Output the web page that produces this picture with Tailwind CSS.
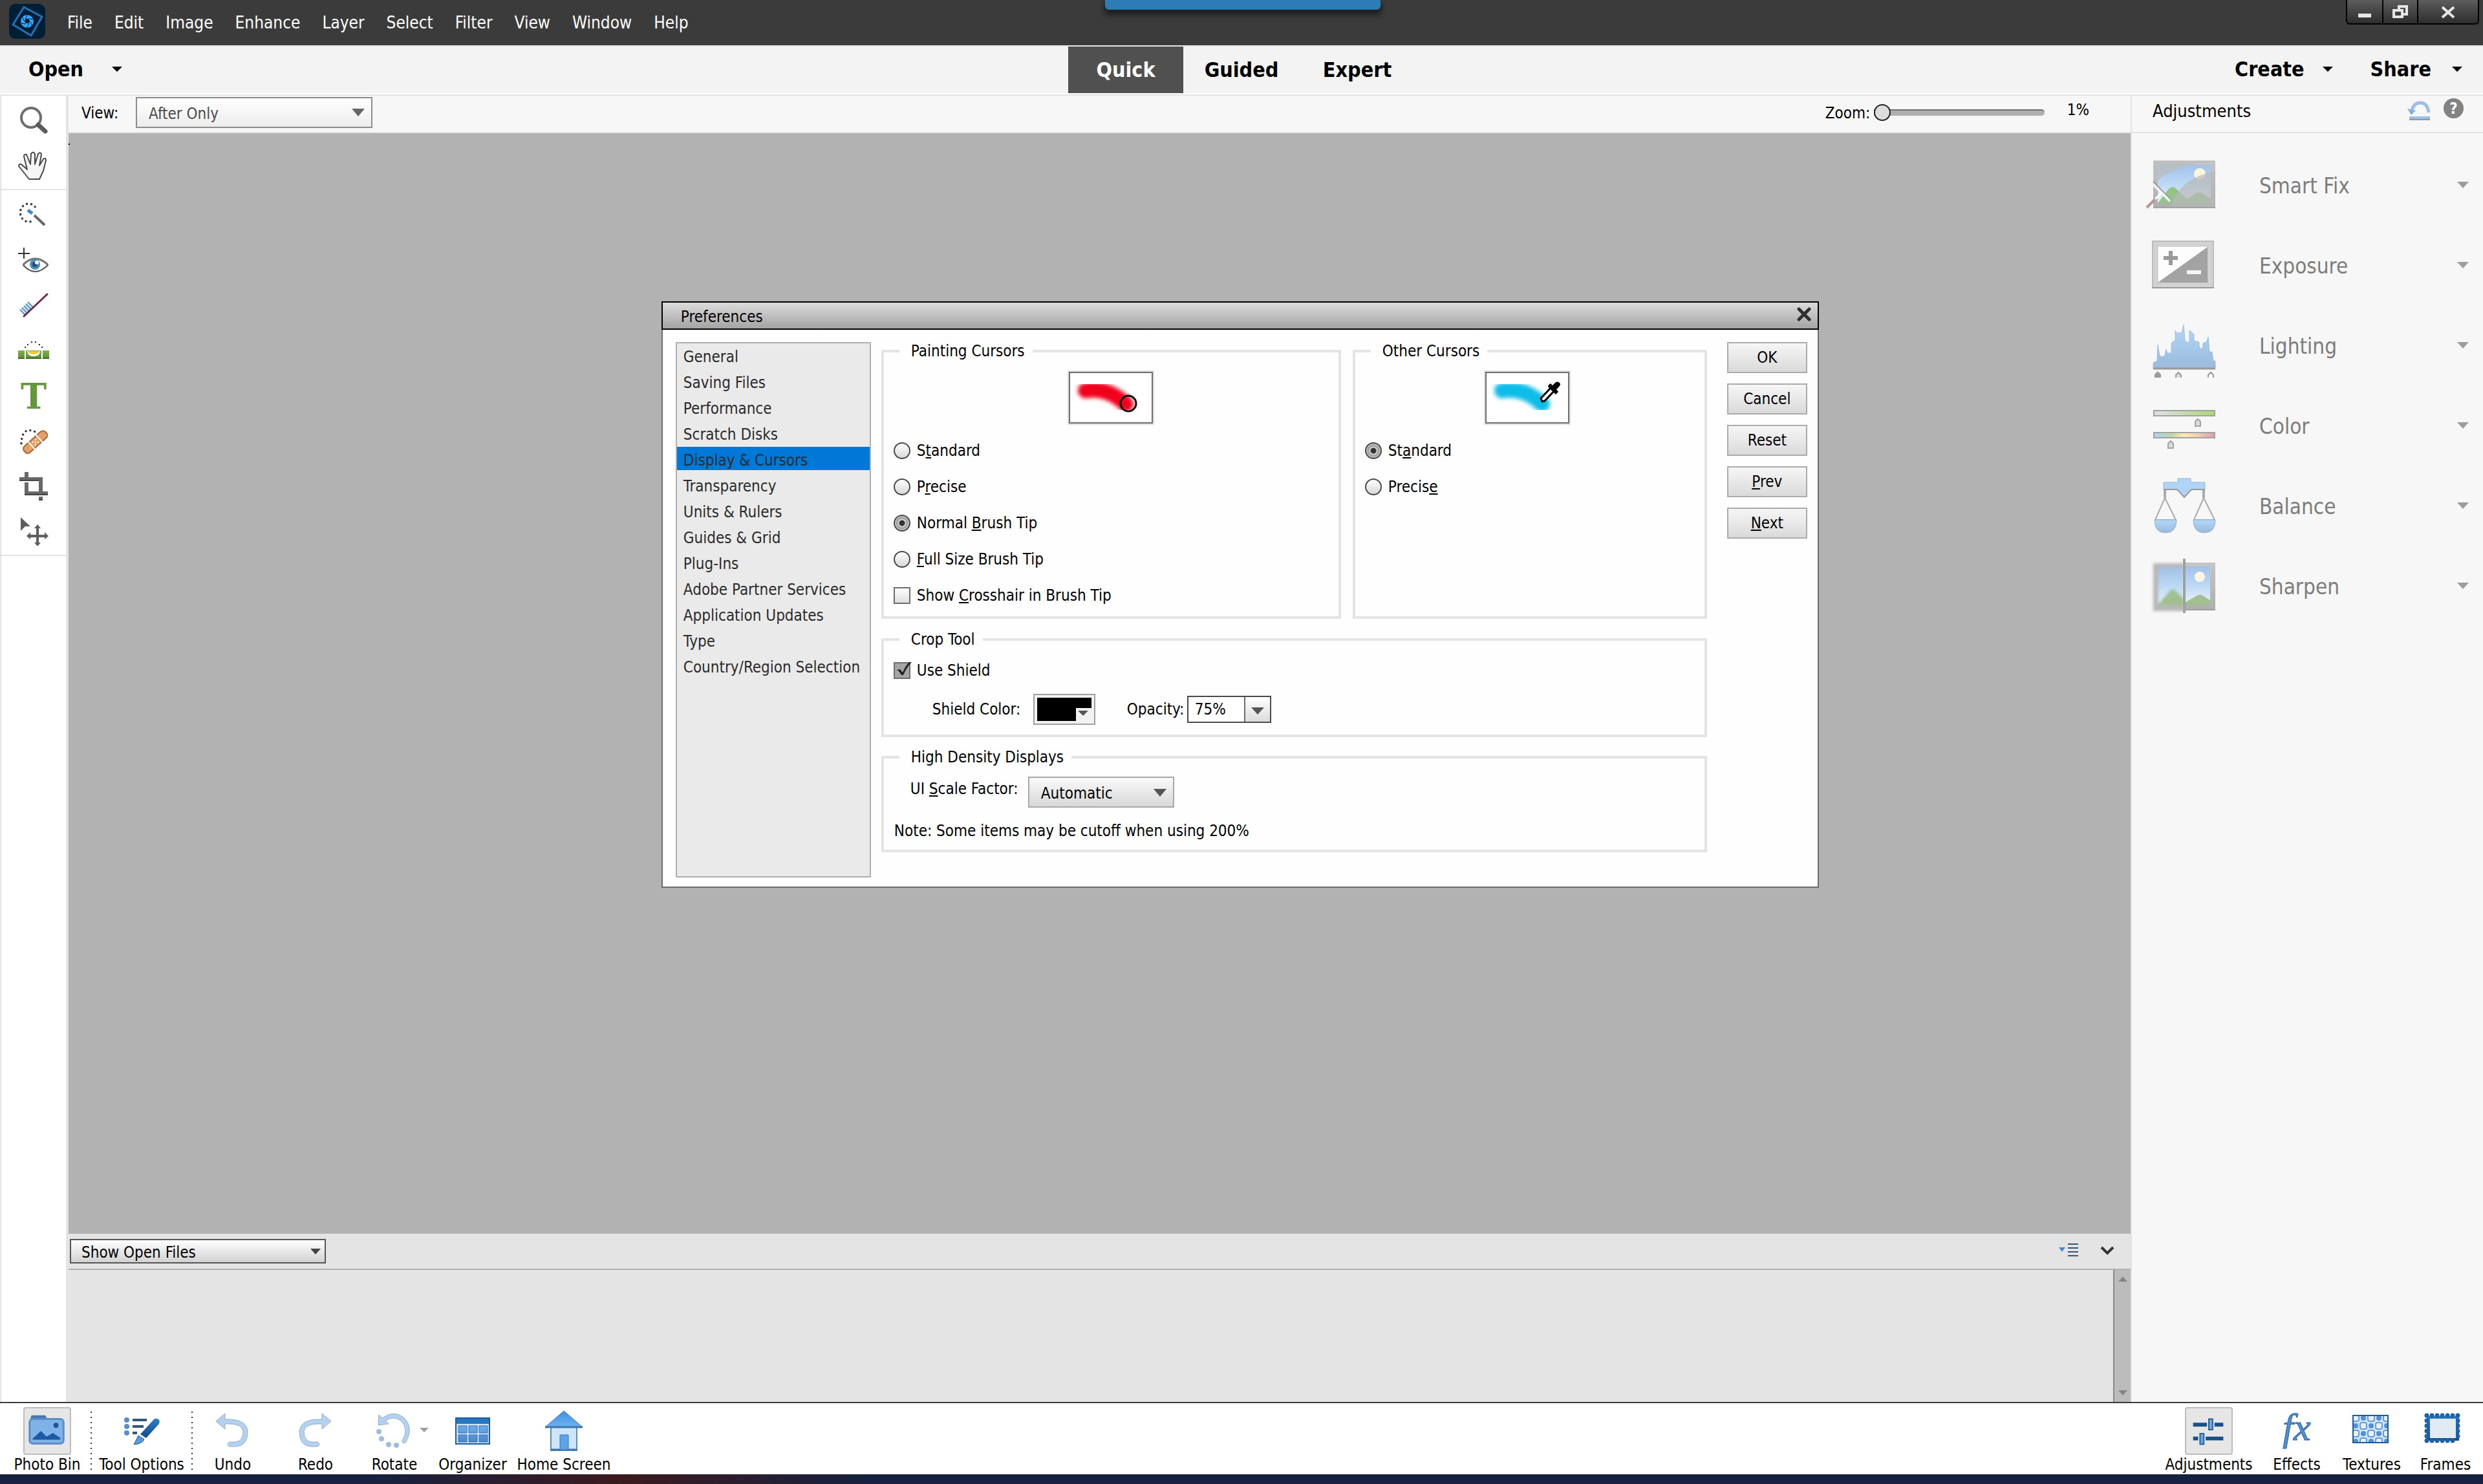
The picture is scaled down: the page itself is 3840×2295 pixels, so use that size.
<!DOCTYPE html>
<html lang="en">
<head>
  <meta charset="UTF-8" />
  <meta name="viewport" content="width=device-width, initial-scale=1.0"/>
  <title>Photo Editor - Preferences</title>
  <script src="https://cdn.jsdelivr.net/npm/@tailwindcss/browser@4"></script>
</head>
<body class="min-h-screen flex flex-col bg-white text-black font-['DejaVu_Sans_Condensed','Noto_Sans',sans-serif] text-2xl leading-7">

  <!-- shared gradients -->
  <svg class="absolute w-0 h-0" aria-hidden="true">
    <defs>
      <linearGradient id="sky" x1="0" y1="0" x2="0" y2="1"><stop offset="0" stop-color="#a3c1e8"/><stop offset="0.5" stop-color="#bcdaf5"/><stop offset="1" stop-color="#f0f4fa"/></linearGradient>
      <linearGradient id="frame" x1="0" y1="0" x2="0" y2="1"><stop offset="0" stop-color="#c6c6c6"/><stop offset="1" stop-color="#aeaeae"/></linearGradient>
      <linearGradient id="paleBlue" x1="0" y1="0" x2="0" y2="1"><stop offset="0" stop-color="#b3d8f8"/><stop offset="1" stop-color="#9ab9dc"/></linearGradient>
      <linearGradient id="blue" x1="0" y1="0" x2="0" y2="1"><stop offset="0" stop-color="#6aaeec"/><stop offset="1" stop-color="#4b86cb"/></linearGradient>
      <linearGradient id="roof" x1="0" y1="0" x2="0" y2="1"><stop offset="0" stop-color="#3f8fe0"/><stop offset="1" stop-color="#6db2f2"/></linearGradient>
      <linearGradient id="navy" x1="0" y1="0" x2="0" y2="1"><stop offset="0" stop-color="#2a80c8"/><stop offset="1" stop-color="#154a8c"/></linearGradient>
      <linearGradient id="green" x1="0" y1="0" x2="0" y2="1"><stop offset="0" stop-color="#7fb052"/><stop offset="1" stop-color="#5c8f30"/></linearGradient>
      <linearGradient id="sat" x1="0" x2="1"><stop offset="0.1" stop-color="#dedede"/><stop offset="1" stop-color="#a9d873"/></linearGradient>
      <linearGradient id="hue" x1="0" x2="1"><stop offset="0" stop-color="#add4f5"/><stop offset="0.28" stop-color="#bcd9a4"/><stop offset="0.5" stop-color="#fbeab4"/><stop offset="0.72" stop-color="#f2cdb0"/><stop offset="1" stop-color="#dd9fae"/></linearGradient>
      <filter id="soft" x="-30%" y="-40%" width="160%" height="180%"><feGaussianBlur stdDeviation="3"/></filter>
      <filter id="soft1" x="-30%" y="-30%" width="160%" height="160%"><feGaussianBlur stdDeviation="2"/></filter>
    </defs>
  </svg>

  <!-- menu bar -->
  <header class="relative flex h-[72px] items-start border-b-2 border-[#e4e4e4] bg-[#3b3b3b] text-[26px] text-white">
    <svg class="ml-3 mt-1 h-[60px] w-[60px] shrink-0" viewBox="0 0 60 60">
      <rect x="2" y="2" width="56" height="54" rx="10" fill="#001e36"/>
      <path d="M25 7L53 22L36 51L8 34Z" fill="none" stroke="#2273b4" stroke-width="3" stroke-linejoin="round"/>
      <circle cx="30" cy="29" r="10" fill="#31a8ff"/>
      <path d="M27 26L31 18M32 25L41 26M34 29L38 36M33 32L29 40M28 33L19 32M26 29L22 22" stroke="#001e36" stroke-width="1"/>
      <path d="M28 25L32 25L34 29L32 32L28 32L26 29Z" fill="#001e36"/>
    </svg>
    <nav class="ml-8 flex h-[70px] items-center gap-[34px]">
      <a href="#">File</a>
      <a href="#">Edit</a>
      <a href="#">Image</a>
      <a href="#">Enhance</a>
      <a href="#">Layer</a>
      <a href="#">Select</a>
      <a href="#">Filter</a>
      <a href="#">View</a>
      <a href="#">Window</a>
      <a href="#">Help</a>
    </nav>
    <div class="absolute top-0 left-[44.5%] h-[15px] w-[426px] rounded-b-md bg-[#2d7cb5] shadow-[0_6px_8px_2px_rgba(0,0,0,0.5)]"></div>
    <div class="mr-1.5 ml-auto flex h-[38px] rounded-b-md border-2 border-t-0 border-black bg-linear-to-b from-[#5d5d5d] to-[#2e2e2e]">
      <button class="grid w-[56px] place-items-center border-r-2 border-black" aria-label="Minimize">
        <svg class="h-6 w-6" viewBox="0 0 24 24"><path d="M2 15h20v6H2z" fill="#e6e6e6"/></svg>
      </button>
      <button class="grid w-[54px] place-items-center border-r-2 border-black" aria-label="Restore">
        <svg class="h-6 w-6" viewBox="0 0 24 24" fill="none" stroke="#e6e6e6" stroke-width="4"><path d="M10 8V4h12v12h-5"/><path d="M2 10h13v10H2z"/></svg>
      </button>
      <button class="grid w-[92px] place-items-center" aria-label="Close">
        <svg class="h-6 w-6" viewBox="0 0 24 24"><path d="M3 5L21 21M21 5L3 21" stroke="#e6e6e6" stroke-width="4"/></svg>
      </button>
    </div>
  </header>

  <!-- mode bar -->
  <div class="grid h-[76px] grid-cols-3 border-b-2 border-[#e3e3e3] bg-[#f3f3f3] text-[32px] font-bold shadow-[inset_0_-2px_0_#fff]">
    <div class="flex items-center pb-1 pl-11">
      <button class="flex items-center gap-11">Open
        <svg class="h-2 w-4" viewBox="0 0 16 8"><path d="M0 0h16L8 8z"/></svg>
      </button>
    </div>
    <div class="flex justify-center">
      <div class="flex h-[72px] w-[536px]">
        <button class="w-[178px] bg-[#505050] text-white">Quick</button>
        <button class="w-[180px]">Guided</button>
        <button class="w-[178px]">Expert</button>
      </div>
    </div>
    <div class="flex items-center justify-end gap-[58px] pr-8 pb-1">
      <button class="flex items-center gap-7">Create
        <svg class="h-2 w-4" viewBox="0 0 16 8"><path d="M0 0h16L8 8z"/></svg>
      </button>
      <button class="flex items-center gap-8">Share
        <svg class="h-2 w-4" viewBox="0 0 16 8"><path d="M0 0h16L8 8z"/></svg>
      </button>
    </div>
  </div>

  <div class="flex flex-1">

    <!-- tools -->
    <aside class="w-[106px] shrink-0 border-r-4 border-l-2 border-[#e4e4e4] bg-white">
      <div class="flex flex-col items-center gap-[26px] border-b-2 border-[#e4e4e4] pt-4 pb-[14px]">
        <button aria-label="Zoom"><svg class="block h-11 w-12" viewBox="0 0 48 44"><circle cx="20" cy="18" r="15" fill="#fff" stroke="#6e6e6e" stroke-width="4"/><path d="M31 29L42 39" stroke="#5a5a5a" stroke-width="7" stroke-linecap="round"/></svg></button>
        <button aria-label="Hand"><svg class="block h-11 w-12" viewBox="0 0 48 44"><path d="M17 43L1 23Q1 19 5 20L14 28L9 8Q9 4 13 5L19 20L20 4Q23 -1 26 4L26 20L31 4Q35 0 36 5L33 22L39 12Q43 9 43 14L39 30L33 43Z" fill="#f6f6f6" stroke="#4a4a4a" stroke-width="2" stroke-linejoin="round"/></svg></button>
      </div>
      <div class="flex flex-col items-center gap-[26px] border-b-2 border-[#e4e4e4] pt-4 pb-[14px]">
        <button aria-label="Quick Selection"><svg class="block h-11 w-12" viewBox="0 0 48 44" fill="none"><path d="M27 11A13 14 0 1 0 23 31" stroke="#333" stroke-width="3" stroke-dasharray="3 4"/><path d="M15 15L22 20" stroke="#3f86c8" stroke-width="5"/><path d="M25 23L41 38" stroke="#666" stroke-width="4"/></svg></button>
        <button aria-label="Red Eye"><svg class="block h-11 w-12" viewBox="0 0 48 44"><path d="M0 12h18M9 3v17" stroke="#333" stroke-width="2"/><path d="M8 30Q26 11 46 30Q26 50 8 30Z" fill="#fff" stroke="#555" stroke-width="2"/><path d="M8 29Q26 11 46 29" fill="none" stroke="#777" stroke-width="3"/><circle cx="26" cy="29" r="8" fill="#4a8cba"/><circle cx="26" cy="29" r="4" fill="#1d4f7a"/><circle cx="29" cy="26" r="3" fill="#fff"/></svg></button>
        <button aria-label="Whiten Teeth"><svg class="block h-11 w-12" viewBox="0 0 48 44"><path d="M3 29L15 17L23 25L10 38Z" fill="#dcebfa"/><path d="M3 29L11 37M6 26L14 34M9 23L17 31M12 20L20 28M15 17L23 25" stroke="#5a94cf" stroke-width="2"/><path d="M9 39L45 5" stroke="#702842" stroke-width="3" stroke-linecap="round"/></svg></button>
        <button aria-label="Straighten"><svg class="block h-11 w-12" viewBox="0 0 48 44"><path d="M0 22h10v13H0zM12 22h24v13H12zM38 22h10v13H38z" fill="url(#green)"/><path d="M0 34h10M12 34h24M38 34h10" stroke="#3f6a1f" stroke-width="2"/><path d="M14 23h20Q33 31 24 31T14 23" fill="#fff"/><path d="M15 23h18Q31 28 24 28T15 23" fill="#f0c92e"/><path d="M10 17h2M14 13h2M20 9h2M26 9h2M32 13h2M36 17h2" stroke="#222" stroke-width="2"/></svg></button>
        <button aria-label="Type"><svg class="block h-11 w-12 overflow-visible" viewBox="0 0 48 44"><text x="24" y="42" text-anchor="middle" font-family="DejaVu Serif" font-size="54" font-weight="bold" fill="#64983a">T</text></svg></button>
        <button aria-label="Spot Healing"><svg class="block h-11 w-12" viewBox="0 0 48 44"><path d="M27 8Q5 -2 5 28" fill="none" stroke="#333" stroke-width="3" stroke-dasharray="3 4"/><g transform="rotate(-42 27 24)"><rect x="5" y="17" width="44" height="13" rx="5" fill="#e5a068" stroke="#a8683a" stroke-width="2"/><path d="M19 16v15M35 16v15" stroke="#fff" stroke-width="2"/><path d="M23 21h2M29 21h2M26 24h2M23 27h2M29 27h2" stroke="#fff" stroke-width="2"/></g></svg></button>
        <button aria-label="Crop"><svg class="block h-11 w-12" viewBox="0 0 48 44" fill="#686868"><path d="M10 0h6v8h22v22h8v6H10V16h6v14h16V14H2V8h8zM32 38h6v5h-6z"/><path d="M2 13h30M10 35h36M32 43h6" stroke="#444" stroke-width="2"/></svg></button>
        <button aria-label="Move"><svg class="block h-11 w-12" viewBox="0 0 48 44" fill="#5e5e5e"><path d="M4 0L19 14L11 14L4 21Z"/><path d="M30 11L35 17H32V27H41V23L47 29L41 34V31H32V39H35L30 45L25 39H28V31H19V34L13 29L19 23V27H28V17H25Z"/></svg></button>
      </div>
    </aside>

    <div class="flex min-w-0 flex-1 flex-col">

      <!-- options bar -->
      <div class="flex h-[58px] items-start border-b-2 border-[#e3e3e3] bg-[#f7f7f7] pl-5">
        <label for="view" class="mt-[13px] w-[84px]">View:</label>
        <div class="relative mt-0.5">
          <select id="view" class="h-12 w-[366px] appearance-none border-2 border-[#8d8d8d] bg-linear-to-b from-white to-[#ededed] pt-1 pl-[18px] text-[#4c4c4c]"><option>After Only</option></select>
          <svg class="pointer-events-none absolute top-[18px] right-3 h-3 w-5" viewBox="0 0 20 12"><path d="M0 0h20L10 12z" fill="#666"/></svg>
        </div>
        <div class="ml-auto flex">
          <label for="zoom" class="mt-[13px] w-[75px]">Zoom:</label>
          <input id="zoom" type="range" min="1" max="100" value="1" class="mt-3 h-7 w-[264px] appearance-none bg-transparent [&::-webkit-slider-runnable-track]:h-2.5 [&::-webkit-slider-runnable-track]:rounded-r-full [&::-webkit-slider-runnable-track]:border-t-2 [&::-webkit-slider-runnable-track]:border-[#6f6f6f] [&::-webkit-slider-runnable-track]:bg-[#b0b0b0] [&::-webkit-slider-thumb]:-mt-2.5 [&::-webkit-slider-thumb]:h-[26px] [&::-webkit-slider-thumb]:w-[26px] [&::-webkit-slider-thumb]:appearance-none [&::-webkit-slider-thumb]:rounded-full [&::-webkit-slider-thumb]:border-2 [&::-webkit-slider-thumb]:border-[#222] [&::-webkit-slider-thumb]:bg-[#dcdcdc]"/>
          <output for="zoom" class="mt-2 mr-16 ml-[35px]">1%</output>
        </div>
      </div>

      <!-- canvas -->
      <main class="relative flex-1 bg-[#b2b2b2]">
        <div class="h-0.5 w-0.5 translate-y-4 bg-black"></div>

        <section role="dialog" aria-labelledby="dlg-title" class="absolute top-[260px] left-[28.75%] w-[1790px] border-2 border-[#6d6d6d] bg-[#fefefe]">
          <div class="-mx-0.5 -mt-0.5 flex h-[44px] items-center justify-between border-2 border-black bg-linear-to-b from-[#dcdcdc] to-[#a4a4a4] pr-[9px] pl-7">
            <h1 id="dlg-title" class="pt-1">Preferences</h1>
            <button aria-label="Close"><svg class="mb-1 block h-6 w-6" viewBox="0 0 24 24"><path d="M4 4L20 20M20 4L4 20" stroke="#2f2f2f" stroke-width="5" stroke-linecap="round"/></svg></button>
          </div>

          <div class="flex pt-[19px] pr-4 pb-[14px] pl-5">
            <ul class="h-[828px] w-[302px] shrink-0 border-2 border-[#b0b0b0] bg-[#eaeaea] text-[#2b2b2b]">
              <li><button class="mb-1 block h-9 w-full pt-1.5 pl-2.5 text-left leading-7">General</button></li>
              <li><button class="mb-1 block h-9 w-full pt-1.5 pl-2.5 text-left leading-7">Saving Files</button></li>
              <li><button class="mb-1 block h-9 w-full pt-1.5 pl-2.5 text-left leading-7">Performance</button></li>
              <li><button class="mb-1 block h-9 w-full pt-1.5 pl-2.5 text-left leading-7">Scratch Disks</button></li>
              <li><button class="mb-1 block h-9 w-full bg-[#0078d7] pt-1.5 pl-2.5 text-left leading-7">Display &amp; Cursors</button></li>
              <li><button class="mb-1 block h-9 w-full pt-1.5 pl-2.5 text-left leading-7">Transparency</button></li>
              <li><button class="mb-1 block h-9 w-full pt-1.5 pl-2.5 text-left leading-7">Units &amp; Rulers</button></li>
              <li><button class="mb-1 block h-9 w-full pt-1.5 pl-2.5 text-left leading-7">Guides &amp; Grid</button></li>
              <li><button class="mb-1 block h-9 w-full pt-1.5 pl-2.5 text-left leading-7">Plug-Ins</button></li>
              <li><button class="mb-1 block h-9 w-full pt-1.5 pl-2.5 text-left leading-7">Adobe Partner Services</button></li>
              <li><button class="mb-1 block h-9 w-full pt-1.5 pl-2.5 text-left leading-7">Application Updates</button></li>
              <li><button class="mb-1 block h-9 w-full pt-1.5 pl-2.5 text-left leading-7">Type</button></li>
              <li><button class="mb-1 block h-9 w-full pt-1.5 pl-2.5 text-left leading-7 whitespace-nowrap">Country/Region Selection</button></li>
            </ul>

            <div class="ml-4 w-[1277px]">
              <div class="flex gap-[18px]">
                <fieldset class="h-[428px] w-[711px] border-4 border-[#e4e4e4]">
                  <legend class="ml-6 pr-3 pl-[18px]">Painting Cursors</legend>
                  <div class="mx-auto mt-4 h-[84px] w-[134px] border-2 border-[#dedede]">
                    <svg class="block h-20 w-[130px] border-2 border-[#707070] bg-white" viewBox="0 0 126 76">
                      <path d="M24 27Q58 21 86 48" fill="none" stroke="#f0001e" stroke-width="24" stroke-linecap="round" filter="url(#soft)"/>
                      <circle cx="90" cy="47" r="12" fill="none" stroke="#111" stroke-width="3"/>
                    </svg>
                  </div>
                  <div class="mt-[26px] flex flex-col gap-7 pl-[15px]">
                    <label class="flex h-7 items-center gap-2.5"><input type="radio" name="paint" class="h-[26px] w-[26px] appearance-none rounded-full border-2 border-[#4a4a4a] bg-linear-to-b from-white to-[#d8d8d8] checked:bg-[radial-gradient(circle,#333_0,#333_4px,#ddd_5px,#999_8px,#ccc_11px)]"/><span>S<u>t</u>andard</span></label>
                    <label class="flex h-7 items-center gap-2.5"><input type="radio" name="paint" class="h-[26px] w-[26px] appearance-none rounded-full border-2 border-[#4a4a4a] bg-linear-to-b from-white to-[#d8d8d8] checked:bg-[radial-gradient(circle,#333_0,#333_4px,#ddd_5px,#999_8px,#ccc_11px)]"/><span>P<u>r</u>ecise</span></label>
                    <label class="flex h-7 items-center gap-2.5"><input type="radio" name="paint" checked class="h-[26px] w-[26px] appearance-none rounded-full border-2 border-[#4a4a4a] bg-linear-to-b from-white to-[#d8d8d8] checked:bg-[radial-gradient(circle,#333_0,#333_4px,#ddd_5px,#999_8px,#ccc_11px)]"/><span>Normal <u>B</u>rush Tip</span></label>
                    <label class="flex h-7 items-center gap-2.5"><input type="radio" name="paint" class="h-[26px] w-[26px] appearance-none rounded-full border-2 border-[#4a4a4a] bg-linear-to-b from-white to-[#d8d8d8] checked:bg-[radial-gradient(circle,#333_0,#333_4px,#ddd_5px,#999_8px,#ccc_11px)]"/><span><u>F</u>ull Size Brush Tip</span></label>
                    <label class="flex h-7 items-center gap-2.5"><input type="checkbox" class="h-[26px] w-[26px] appearance-none border-2 border-[#6d6d6d] bg-linear-to-b from-white to-[#dedede]"/><span>Show <u>C</u>rosshair in Brush Tip</span></label>
                  </div>
                </fieldset>

                <fieldset class="h-[428px] w-[548px] border-4 border-[#e4e4e4]">
                  <legend class="ml-6 pr-3 pl-[18px]">Other Cursors</legend>
                  <div class="mt-4 ml-[199px] h-[84px] w-[134px] border-2 border-[#dedede]">
                    <svg class="block h-20 w-[130px] border-2 border-[#707070] bg-white" viewBox="0 0 126 76">
                      <path d="M24 27Q58 21 86 48" fill="none" stroke="#10bde8" stroke-width="24" stroke-linecap="round" filter="url(#soft)"/>
                      <path d="M86 44L84 39L99 23L104 28L90 43Z" fill="#fff" stroke="#000" stroke-width="3" stroke-linejoin="round"/>
                      <path d="M96 18L99 16L102 19L107 14Q112 12 114 17Q114 20 108 25L111 29L107 33L95 21Z" fill="#000"/>
                    </svg>
                  </div>
                  <div class="mt-[26px] flex flex-col gap-7 pl-[15px]">
                    <label class="flex h-7 items-center gap-2.5"><input type="radio" name="other" checked class="h-[26px] w-[26px] appearance-none rounded-full border-2 border-[#4a4a4a] bg-linear-to-b from-white to-[#d8d8d8] checked:bg-[radial-gradient(circle,#333_0,#333_4px,#ddd_5px,#999_8px,#ccc_11px)]"/><span>St<u>a</u>ndard</span></label>
                    <label class="flex h-7 items-center gap-2.5"><input type="radio" name="other" class="h-[26px] w-[26px] appearance-none rounded-full border-2 border-[#4a4a4a] bg-linear-to-b from-white to-[#d8d8d8] checked:bg-[radial-gradient(circle,#333_0,#333_4px,#ddd_5px,#999_8px,#ccc_11px)]"/><span>Precis<u>e</u></span></label>
                  </div>
                </fieldset>
              </div>

              <fieldset class="mt-[18px] h-[165px] border-4 border-[#e4e4e4]">
                <legend class="ml-6 pr-3 pl-[18px]">Crop Tool</legend>
                <label class="mt-5 ml-[15px] flex h-7 items-center gap-2.5">
                  <span class="relative">
                    <input type="checkbox" checked class="block h-[26px] w-[26px] appearance-none border-2 border-[#6d6d6d] bg-[#a5a5a5]"/>
                    <svg class="pointer-events-none absolute top-0 left-0 h-[26px] w-7" viewBox="0 0 28 26"><path d="M5 12L10 11L14 16Q18 6 24 0H28Q20 8 15 20H12Q9 14 5 12Z" fill="#222"/></svg>
                  </span>
                  <span>Use Shield</span>
                </label>
                <div class="mt-[22px] flex items-center pl-[75px]">
                  <label for="shield" class="w-[156px]">Shield Color:</label>
                  <button id="shield" class="grid h-12 w-[96px] place-items-center border-2 border-[#a0a0a0] bg-[#f2f2f2]">
                    <svg class="h-9 w-[84px]" viewBox="0 0 84 36"><path d="M0 0h84v36H0z"/><path d="M60 16h24v20H60z" fill="#f2f2f2"/><path d="M63 20h16l-8 8z" fill="#555"/></svg>
                  </button>
                  <label for="opacity" class="ml-[49px] w-[93px]">Opacity:</label>
                  <div class="flex h-[42px] border-2 border-[#4a4a4a] bg-white">
                    <input id="opacity" type="text" value="75%" class="w-[86px] pl-2.5"/>
                    <button class="grid w-10 place-items-center border-l-2 border-[#6d6d6d] bg-linear-to-b from-white to-[#dcdcdc]" aria-label="Opacity slider"><svg class="mt-1 h-[11px] w-5" viewBox="0 0 20 11"><path d="M0 0h20L10 11z" fill="#555"/></svg></button>
                  </div>
                </div>
              </fieldset>

              <fieldset class="mt-[17px] h-[161px] border-4 border-[#e4e4e4]">
                <legend class="ml-6 pr-3 pl-[18px]">High Density Displays</legend>
                <div class="mt-4 flex items-start pl-[41px]">
                  <label for="scale" class="mt-[5px] w-[182px]">UI <u>S</u>cale Factor:</label>
                  <div class="relative">
                    <select id="scale" class="h-12 w-[226px] appearance-none border-2 border-[#a8a8a8] bg-linear-to-b from-[#fafafa] to-[#d8d8d8] pt-1 pl-[18px]"><option>Automatic</option></select>
                    <svg class="pointer-events-none absolute top-[19px] right-3 h-3 w-5" viewBox="0 0 20 12"><path d="M0 0h20L10 12z" fill="#555"/></svg>
                  </div>
                </div>
                <p class="mt-[22px] ml-4">Note: Some items may be cutoff when using 200%</p>
              </fieldset>
            </div>

            <div class="ml-auto flex w-[124px] flex-col gap-4">
              <button class="h-12 border-2 border-[#ababab] bg-linear-to-b from-[#f6f6f6] to-[#dadada]">OK</button>
              <button class="h-12 border-2 border-[#ababab] bg-linear-to-b from-[#f6f6f6] to-[#dadada]">Cancel</button>
              <button class="h-12 border-2 border-[#ababab] bg-linear-to-b from-[#f6f6f6] to-[#dadada]">Reset</button>
              <button class="h-12 border-2 border-[#ababab] bg-linear-to-b from-[#f6f6f6] to-[#dadada]"><u>P</u>rev</button>
              <button class="h-12 border-2 border-[#ababab] bg-linear-to-b from-[#f6f6f6] to-[#dadada]"><u>N</u>ext</button>
            </div>
          </div>
        </section>
      </main>

      <!-- photo bin -->
      <div class="flex h-14 items-start border-b-2 border-[#b0b0b0] bg-[#e4e4e4] pl-0.5">
        <div class="relative mt-2">
          <select aria-label="Photo bin source" class="h-[38px] w-[396px] appearance-none border-2 border-[#555] bg-linear-to-b from-white to-[#d2d2d2] pt-1 pl-4"><option>Show Open Files</option></select>
          <svg class="pointer-events-none absolute top-[15px] right-2 h-[9px] w-4" viewBox="0 0 16 9"><path d="M0 0h16L8 9z" fill="#444"/></svg>
        </div>
        <button class="mt-[14px] ml-auto" aria-label="Bin options"><svg class="block h-6 w-8" viewBox="0 0 32 24"><path d="M1 7h10l-5 7z" fill="#4a86c8"/><path d="M15 2h16M15 8h16M15 14h16M15 20h16" stroke="#2f5478" stroke-width="2"/></svg></button>
        <button class="mt-[14px] mr-6 ml-8" aria-label="Collapse bin"><svg class="block h-6 w-6" viewBox="0 0 24 24"><path d="M3 7L12 16L21 7" fill="none" stroke="#333" stroke-width="4"/></svg></button>
      </div>
      <div class="flex h-[204px] justify-end bg-[#e4e4e4]">
        <div class="flex w-[27px] flex-col items-center justify-between border-l-2 border-[#8a8a8a] bg-[#bcbcbc] pt-2.5 pb-2.5">
          <svg class="h-2 w-[14px]" viewBox="0 0 14 8"><path d="M7 0L14 8H0z" fill="#858585"/></svg>
          <svg class="h-2 w-[14px]" viewBox="0 0 14 8"><path d="M0 0h14L7 8z" fill="#858585"/></svg>
        </div>
      </div>
    </div>

    <!-- adjustments panel -->
    <aside class="w-[545px] shrink-0 border-l-2 border-[#e3e3e3] bg-[#f7f7f7]">
      <div class="flex h-[58px] items-start border-b-2 border-[#e3e3e3] pr-[30px] pl-8">
        <h2 class="mt-2.5 text-[27px]">Adjustments</h2>
        <button class="mt-2 ml-auto" aria-label="Reset"><svg class="block h-8 w-9" viewBox="0 0 36 32"><path d="M7 16Q9 3 20 3T33 18" fill="none" stroke="#9cc0e6" stroke-width="5"/><path d="M0 12L13 15L6 22Z" fill="#8aaed6"/><path d="M3 24h32v5H3z" fill="#9cbfe4"/><path d="M3 29h32" stroke="#7e9cba" stroke-width="2"/></svg></button>
        <button class="mt-1 ml-5 grid h-[31px] w-[31px] place-items-center rounded-full bg-[#828282] font-bold text-white" aria-label="Help">?</button>
      </div>
      <ul class="pt-5 text-[33px] text-[#7d7d7d]">
        <li><button class="flex h-[124px] w-full items-center pr-[22px] pl-[21px]">
          <svg class="mr-16 h-24 w-28" viewBox="0 -8 112 96">
            <rect x="12" y="1" width="96" height="73" fill="url(#frame)"/>
            <rect x="19" y="7" width="82" height="60" fill="url(#sky)"/>
            <circle cx="84" cy="21" r="9" fill="#fdf6dc"/>
            <path d="M19 66L36 44Q42 38 48 44L64 60L78 51Q84 48 88 51L101 59V67H19Z" fill="#94c48a"/>
            <path d="M12 36Q50 4 108 2V0H12Z" fill="#bcbcbc" opacity="0.700"/>
            <path d="M42 62Q60 25 108 17V74H42Z" fill="#b8b8b8" opacity="0.700"/>
            <path d="M12 33L40 62" stroke="#8a8a8a" stroke-width="2"/><path d="M10 35L38 63" stroke="#f2f2f2" stroke-width="4"/>
            <path d="M25 50L14 61" stroke="#fff" stroke-width="3"/><path d="M15 60L2 73" stroke="#b8949c" stroke-width="4"/>
            <path d="M12 73h96" stroke="#a2a2a2" stroke-width="2"/>
          </svg>
          Smart Fix
          <svg class="mb-1 ml-auto h-2.5 w-[18px]" viewBox="0 0 18 10"><path d="M0 0h18L9 10z" fill="#9d9d9d"/></svg>
        </button></li>
        <li><button class="flex h-[124px] w-full items-center pr-[22px] pl-[21px]">
          <svg class="mr-16 h-24 w-28" viewBox="0 -8 112 96">
            <rect x="11" y="1" width="94" height="72" fill="#d2d2d2" stroke="#bcbcbc" stroke-width="2"/>
            <path d="M10 73h96" stroke="#999" stroke-width="2"/>
            <rect x="19" y="9" width="77" height="56" fill="#fdfdfd" stroke="#c4c4c4"/>
            <path d="M96 10V65H19Z" fill="#a3a3a3"/>
            <path d="M28 27h22M39 16v22" stroke="#9a9a9a" stroke-width="6"/>
            <path d="M64 49h22" stroke="#f4f4f4" stroke-width="6"/>
          </svg>
          Exposure
          <svg class="mb-1 ml-auto h-2.5 w-[18px]" viewBox="0 0 18 10"><path d="M0 0h18L9 10z" fill="#9d9d9d"/></svg>
        </button></li>
        <li><button class="flex h-[124px] w-full items-center pr-[22px] pl-[21px]">
          <svg class="mr-16 h-24 w-28" viewBox="0 -8 112 96">
            <path d="M12 74V65L18 62L19 37L22 54Q25 57 30 54L32 44L34 50L40 50V35Q42 31 46 31V15L48 19H56L59 6L61 30Q65 36 68 32V15L75 21V31L83 33V39Q86 46 88 43L89 35L95 32L97 25L99 48H103L105 62H108V74Z" fill="url(#paleBlue)" stroke="#9cbfe3" stroke-width="1"/>
            <path d="M12 74h96" stroke="#999" stroke-width="3"/>
            <path d="M19 78L24 83V91H14V83Z" fill="#9b9b9b"/>
            <path d="M51 80L55 84V91H47V84Z" fill="#ddd" stroke="#999" stroke-width="2"/>
            <path d="M101 80L105 84V91H97V84Z" fill="#fff" stroke="#999" stroke-width="2"/>
          </svg>
          Lighting
          <svg class="mb-1 ml-auto h-2.5 w-[18px]" viewBox="0 0 18 10"><path d="M0 0h18L9 10z" fill="#9d9d9d"/></svg>
        </button></li>
        <li><button class="flex h-[124px] w-full items-center pr-[22px] pl-[21px]">
          <svg class="mr-16 h-24 w-28" viewBox="0 -8 112 96" stroke="#a3a3a3" stroke-width="2">
            <rect x="13" y="15" width="94" height="8" fill="url(#sat)"/>
            <rect x="13" y="49" width="94" height="8" fill="url(#hue)"/>
            <path d="M81 28L85 32V39H77V32Z" fill="#ddd"/>
            <path d="M39 62L43 66V73H35V66Z" fill="#ddd"/>
          </svg>
          Color
          <svg class="mb-1 ml-auto h-2.5 w-[18px]" viewBox="0 0 18 10"><path d="M0 0h18L9 10z" fill="#9d9d9d"/></svg>
        </button></li>
        <li><button class="flex h-[124px] w-full items-center pr-[22px] pl-[21px]">
          <svg class="mr-16 h-24 w-28" viewBox="0 -8 112 96">
            <path d="M30 13V26L15 60H47L30 26M90 13V26L75 60H107L90 26" fill="none" stroke="#ababab" stroke-width="2"/>
            <path d="M30 13V26M90 13V26" stroke="#ababab" stroke-width="4"/>
            <path d="M28 2H50V-4H70V2H92V13H71L60 25L49 13H28Z" fill="#b0d4f5" stroke="#92b4d8" stroke-width="1"/>
            <path d="M28 13H49L60 25L71 13H92" fill="none" stroke="#999" stroke-width="2"/>
            <path d="M14 60H48Q48 80 31 80T14 60ZM74 60H108Q108 80 91 80T74 60Z" fill="url(#paleBlue)" stroke="#92b0d2" stroke-width="1"/>
          </svg>
          Balance
          <svg class="mb-1 ml-auto h-2.5 w-[18px]" viewBox="0 0 18 10"><path d="M0 0h18L9 10z" fill="#9d9d9d"/></svg>
        </button></li>
        <li><button class="flex h-[124px] w-full items-center pr-[22px] pl-[21px]">
          <svg class="mr-16 h-24 w-28" viewBox="0 -8 112 96">
            <g filter="url(#soft1)"><rect x="12" y="3" width="48" height="74" fill="#b8b8b8"/><rect x="20" y="10" width="40" height="58" fill="url(#sky)"/><path d="M20 66L38 45Q42 41 46 45L60 58V68H20Z" fill="#a0c090"/></g>
            <rect x="60" y="2" width="48" height="74" fill="url(#frame)"/>
            <rect x="60" y="8" width="40" height="60" fill="url(#sky)"/>
            <circle cx="84" cy="24" r="8" fill="#fbf7e4"/>
            <path d="M62 63L80 53Q84 50 88 53L100 60V68H62Z" fill="#a0c090"/>
            <path d="M60 75h48" stroke="#9c9c9c" stroke-width="2"/>
            <rect x="58" y="-4" width="4" height="84" fill="#a0a0a0"/>
          </svg>
          Sharpen
          <svg class="mb-1 ml-auto h-2.5 w-[18px]" viewBox="0 0 18 10"><path d="M0 0h18L9 10z" fill="#9d9d9d"/></svg>
        </button></li>
      </ul>
    </aside>
  </div>

  <!-- task bar -->
  <footer class="flex h-[112px] justify-between border-t-2 border-[#3b3b3b] bg-white pt-1.5 whitespace-nowrap">
    <div class="flex pl-1.5">
      <button class="flex w-[134px] flex-col items-center">
        <svg class="h-[74px] w-[74px] rounded border-2 border-[#bdbdbd] bg-[#e6e6e6]" viewBox="1 1 72 72">
          <path d="M12 12H34L37 18H10Z" fill="#4a78aa"/>
          <rect x="9" y="18" width="54" height="39" rx="5" fill="#7fb3e8" stroke="#5b8dc4" stroke-width="3"/>
          <circle cx="51" cy="28" r="4" fill="#1d5596"/>
          <path d="M14 51V49L27 37L36 46L46 40L58 48V51Z" fill="#1c5ba3"/>
        </svg>
        <span class="mt-px">Photo Bin</span>
      </button>
      <div class="mt-[7px] h-[90px] w-0.5 bg-[repeating-linear-gradient(to_bottom,#333_0,#333_2px,transparent_2px,transparent_8px)]"></div>
      <button class="flex w-[154px] flex-col items-center">
        <svg class="h-[74px] w-[74px]" viewBox="0 0 74 74">
          <path d="M23 20h22M23 30h17M23 40h7" stroke="#34557a" stroke-width="4"/>
          <circle cx="14" cy="20" r="4" fill="#5a8ec4"/><circle cx="14" cy="30" r="4" fill="#5a8ec4"/><circle cx="14" cy="40" r="4" fill="#5a8ec4"/>
          <path d="M35 42L56 19Q60 16 64 20Q66 23 63 27L44 48Z" fill="url(#navy)"/>
          <path d="M32 44L41 50Q38 57 25 58Z" fill="#5a9ad8" stroke="#2a5c90" stroke-width="1"/>
        </svg>
        <span class="mt-px">Tool Options</span>
      </button>
      <div class="mt-[7px] h-[90px] w-0.5 bg-[repeating-linear-gradient(to_bottom,#333_0,#333_2px,transparent_2px,transparent_8px)]"></div>
      <button class="flex w-[124px] flex-col items-center">
        <svg class="h-[74px] w-[74px]" viewBox="0 0 74 74"><path d="M11 22L25 10V19Q59 18 60 38Q60 60 42 61H32Q26 58 32 54H42Q53 52 53 38Q52 25 25 26V34Z" fill="#b4d2f0" stroke="#8fadcd" stroke-width="1"/></svg>
        <span class="mt-px">Undo</span>
      </button>
      <button class="flex w-[132px] flex-col items-center">
        <svg class="h-[74px] w-[74px]" viewBox="0 0 74 74"><path d="M61 22L47 10V19Q13 18 12 38Q12 60 30 61H40Q46 58 40 54H30Q19 52 19 38Q20 25 47 26V34Z" fill="#b4d2f0" stroke="#8fadcd" stroke-width="1"/></svg>
        <span class="mt-px">Redo</span>
      </button>
      <button class="flex w-[112px] flex-col items-center">
        <svg class="h-[74px] w-[74px] overflow-visible" viewBox="0 0 74 74"><path d="M13 12L18 17Q36 4 51 16Q68 32 54 55Q49 57 49 52Q60 34 47 21Q35 13 23 21L28 26L12 28Z" fill="#b4d2f0" stroke="#8fadcd" stroke-width="1"/><circle cx="13" cy="38" r="4" fill="#9dbce0"/><circle cx="17" cy="49" r="4" fill="#9dbce0"/><circle cx="28" cy="58" r="4" fill="#9dbce0"/><circle cx="40" cy="59" r="4" fill="#9dbce0"/><path d="M76 32h14l-7 7z" fill="#a0a0a0"/></svg>
        <span class="mt-px">Rotate</span>
      </button>
      <button class="flex w-[130px] flex-col items-center">
        <svg class="h-[74px] w-[74px]" viewBox="0 0 74 74"><path d="M10 16h54v42H10z" fill="#1c5c9c"/><path d="M12 18h50v8H12z" fill="#2878c0"/><path d="M12 26h50v30H12z" fill="#cfe3f8"/><path d="M15 29h13v11H15zM31 29h13v11H31zM47 29h13v11H47zM15 43h13v11H15zM31 43h13v11H31zM47 43h13v11H47z" fill="url(#blue)" stroke="#356fae" stroke-width="1"/></svg>
        <span class="mt-px">Organizer</span>
      </button>
      <button class="flex w-[152px] flex-col items-center">
        <svg class="h-[74px] w-[74px]" viewBox="0 0 74 74"><path d="M17 30h40v37H17z" fill="#cde4fb" stroke="#5e8db8" stroke-width="2"/><path d="M37 6L66 31H8Z" fill="url(#roof)" stroke="#3f7cba" stroke-width="1"/><path d="M8 31h58M17 66h40" stroke="#3f74a8" stroke-width="3"/><path d="M31 43h13v23H31z" fill="#5ba4ea" stroke="#3c76b2" stroke-width="1"/></svg>
        <span class="mt-px">Home Screen</span>
      </button>
    </div>
    <div class="flex pr-2">
      <button class="flex w-[168px] flex-col items-center">
        <svg class="h-[74px] w-[74px] rounded border-2 border-[#bdbdbd] bg-[#e6e6e6]" viewBox="1 1 72 72"><path d="M12 27h48M12 49h48" stroke="#174f88" stroke-width="6"/><path d="M34 17h12v20H34zM20 39h12v20H20z" fill="#e6e6e6"/><path d="M37 18h6v17h-6zM23 41h6v17h-6z" fill="#6aa8e8" stroke="#2a5f98" stroke-width="2"/></svg>
        <span class="mt-px">Adjustments</span>
      </button>
      <button class="flex w-[104px] flex-col items-center">
        <svg class="h-[74px] w-[74px]" viewBox="0 0 74 74"><text x="37" y="51" text-anchor="middle" font-family="Liberation Serif" font-style="italic" font-size="60" fill="#4f8fd2" stroke="#2c609e">fx</text></svg>
        <span class="mt-px">Effects</span>
      </button>
      <button class="flex w-[128px] flex-col items-center">
        <svg class="h-[74px] w-[74px]" viewBox="0 0 74 74">
          <defs><pattern id="tex" x="6" y="11" width="24" height="24" patternUnits="userSpaceOnUse"><path d="M0 0h24v24H0z" fill="#d3e5f9"/><circle cx="18" cy="6" r="4" fill="#4f90d8"/><circle cx="6" cy="18" r="4" fill="#4f90d8"/><rect x="1" y="1" width="10" height="10" rx="3" fill="#e8f1fb" stroke="#5f9de0" stroke-width="2"/><rect x="13" y="13" width="10" height="10" rx="3" fill="#e8f1fb" stroke="#5f9de0" stroke-width="2"/></pattern></defs>
          <rect x="8" y="13" width="54" height="42" fill="url(#tex)" stroke="#1c5c9c" stroke-width="2"/>
        </svg>
        <span class="mt-px">Textures</span>
      </button>
      <button class="flex w-[100px] flex-col items-center">
        <svg class="h-[74px] w-[74px]" viewBox="0 0 74 74"><rect x="8" y="14" width="50" height="38" fill="url(#navy)"/><path d="M8 13H56M8 52H56M8 13V52M56 13V52" fill="none" stroke="#1f62a8" stroke-width="7" stroke-linecap="round" stroke-dasharray="0 8"/><rect x="13" y="18" width="40" height="30" fill="#e2ebf3"/></svg>
        <span class="mt-px">Frames</span>
      </button>
    </div>
  </footer>
  <div class="h-[15px] bg-[#17213f]">
    <div class="h-full w-1/2 bg-linear-to-r from-transparent from-30% via-[#3c1a1e] via-50% to-transparent to-70%"></div>
  </div>

</body>
</html>
